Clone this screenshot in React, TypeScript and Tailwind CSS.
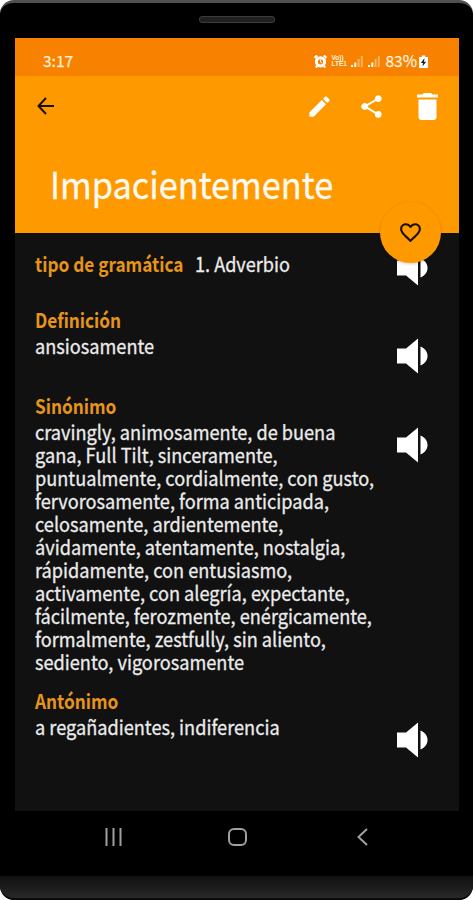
import React from 'react';

interface Seccion {
  titulo: string;
  lineas: string[];
  className: string;
  altavoz: string;
}

const secciones: Seccion[] = [
  { titulo: 'Definición', lineas: ['ansiosamente'], className: 'mt-[33px]', altavoz: 'mt-[4px]' },
  {
    titulo: 'Sinónimo',
    lineas: [
      'cravingly, animosamente, de buena',
      'gana, Full Tilt, sinceramente,',
      'puntualmente, cordialmente, con gusto,',
      'fervorosamente, forma anticipada,',
      'celosamente, ardientemente,',
      'ávidamente, atentamente, nostalgia,',
      'rápidamente, con entusiasmo,',
      'activamente, con alegría, expectante,',
      'fácilmente, ferozmente, enérgicamente,',
      'formalmente, zestfully, sin aliento,',
      'sediento, vigorosamente',
    ],
    className: 'mt-[37px]',
    altavoz: 'mt-[7px]',
  },
  {
    titulo: 'Antónimo',
    lineas: ['a regañadientes, indiferencia'],
    className: 'mt-[16px]',
    altavoz: 'mt-[7px]',
  },
];

const Altavoz: React.FC = () => (
  <svg width="31" height="36" viewBox="0 0 31 36" fill="white" className="shrink-0">
    <path d="M0 10.500h9L21 .5v35L9 25.500H0z" />
    <path d="M23.500 8.500C28 10.500 30.500 14 30.500 18s-2.500 7.500-7 9.500z" />
  </svg>
);

const Senal: React.FC = () => (
  <svg width="12" height="12" viewBox="0 0 12 12" fill="white">
    <path d="M0 10h2v2H0zM3.300 7.500h2V12h-2z" />
    <path d="M6.600 4h2v8h-2zM9.800 1h2v11h-2z" opacity=".4" />
  </svg>
);

const BarraEstado: React.FC = () => (
  <div className="flex h-[38px] items-center justify-between bg-[#f98100] pr-[31px] pl-[28px] pt-[8px] text-[15.500px] leading-none text-[#fff0dc] [-webkit-text-stroke:0.25px]">
    <span>3:17</span>
    <div className="flex items-center">
      <svg width="13" height="13" viewBox="0 0 13 13" fill="none" stroke="white">
        <circle cx="6.500" cy="6.800" r="4.100" strokeWidth="3" />
        <path d="M.5 2.800 3.200.5M12.500 2.800 9.800.5M1.800 12.500l1.500-1.800M11.200 12.500 9.700 10.700" strokeWidth="2.200" />
        <path d="M6.500 4.500v2.500l1.500 1" strokeWidth="1" />
      </svg>
      <span className="ml-[5px] flex w-[17px] flex-col font-['Liberation_Sans',sans-serif] text-[6.500px] leading-[6.500px] font-bold [-webkit-text-stroke:0]">
        <span>Vo))</span>
        <span>LTE1</span>
      </span>
      <span className="ml-[2px]"><Senal /></span>
      <span className="ml-[5px]"><Senal /></span>
      <span className="ml-[6px]">83%</span>
      <svg width="9" height="13" viewBox="0 0 9 13" className="ml-[2px]">
        <path d="M2.800.5h3.400v1.500H9V13H0V2h2.800z" fill="white" />
        <path d="M5.500 3 1.800 8h2.200L3.500 11.500 7.200 6.800H5z" fill="#222" />
      </svg>
    </div>
  </div>
);

const Cabecera: React.FC = () => (
  <header className="relative h-[157px] bg-[#ff9900]">
    <div className="flex h-[60px] items-center">
      <svg width="17" height="18" viewBox="0 0 17 18" fill="none" stroke="#1a1000" strokeWidth="2" className="ml-[22px]">
        <path d="M9 1 1.500 9 9 17M1.500 9H17" />
      </svg>
      <svg width="27" height="27" viewBox="0 0 24 24" fill="white" className="ml-[252px]">
        <path d="M3 17.250V21h3.750L17.810 9.940l-3.750-3.750L3 17.250zM20.710 7.040a1 1 0 0 0 0-1.410l-2.340-2.340a1 1 0 0 0-1.410 0l-1.830 1.830 3.750 3.750 1.830-1.830z" />
      </svg>
      <svg width="27" height="27" viewBox="0 0 24 24" fill="white" className="ml-[25px]">
        <path d="M18 16.080c-.76 0-1.440.3-1.960.77L8.910 12.700c.05-.23.09-.46.09-.7s-.04-.47-.09-.7l7.050-4.110A3 3 0 1 0 15 5c0 .24.04.47.09.7L8.040 9.810a3 3 0 1 0 0 4.380l7.120 4.160c-.05.21-.08.43-.08.65a2.920 2.920 0 1 0 2.920-2.920z" />
      </svg>
      <svg width="21" height="27" viewBox="0 0 21 27" fill="white" className="ml-[32px]">
        <path d="M0 1.500h5.500L7 0h7l1.500 1.500H21v3H0zM1.500 6.500h18V24a3 3 0 0 1-3 3h-12a3 3 0 0 1-3-3z" />
      </svg>
    </div>
    <h1 className="mt-[19px] ml-[35px] w-fit origin-left scale-x-[0.927] text-[37px] leading-[56px] whitespace-nowrap text-[#fffaf2] [-webkit-text-stroke:0.3px]">
      Impacientemente
    </h1>
    {/* Botón de favorito, sobre el borde de la cabecera */}
    <button type="button" className="absolute right-[18px] -bottom-[30px] z-10 flex size-[61px] items-center justify-center rounded-full bg-[#ff9900] shadow-[0_1px_3px_rgba(0,0,0,0.2)]">
      <svg width="25" height="25" viewBox="0 0 24 24" fill="#1a1000">
        <path d="M16.500 3c-1.740 0-3.410.81-4.500 2.090C10.910 3.810 9.240 3 7.500 3 4.420 3 2 5.420 2 8.500c0 3.780 3.400 6.860 8.550 11.540L12 21.350l1.450-1.320C18.600 15.360 22 12.280 22 8.500 22 5.420 19.580 3 16.500 3zm-4.400 15.550-.1.100-.1-.1C7.140 14.240 4 11.390 4 8.500 4 6.500 5.500 5 7.500 5c1.540 0 3.040.99 3.570 2.360h1.870C13.460 5.990 14.960 5 16.500 5c2 0 3.500 1.500 3.500 3.500 0 2.890-3.140 5.740-7.900 10.050z" />
      </svg>
    </button>
  </header>
);

export default function App() {
  return (
    <div className="h-[900px] w-[473px] overflow-hidden bg-white font-['Noto_Sans_CJK_JP','Noto_Sans',sans-serif]">
      <div className="flex h-full flex-col overflow-hidden rounded-[14px] border-t-[3px] border-[#505050] bg-black">
        <div className="flex h-[35px] shrink-0 justify-center pt-[13px]">
          <div className="h-[7px] w-[76px] rounded-[3px] border border-[#3c3c3c] bg-[#202020]" />
        </div>

        <div className="mr-[14px] ml-[15px] flex h-[773px] shrink-0 flex-col bg-[#111111]">
          <BarraEstado />
          <Cabecera />

          <main className="pr-[31px] pl-[20px] text-[20px] leading-[23px] text-[#ececec]">
            <div className="flex h-[42px] justify-between pt-[19px]">
              <div className="flex w-[340px] whitespace-nowrap">
                <span className="w-[160px] origin-left scale-x-[0.86] font-bold text-[#e6951a]">tipo de gramática</span>
                <span className="origin-left scale-x-[0.905] [-webkit-text-stroke:0.3px]">1. Adverbio</span>
              </div>
              <div className="-mt-[2px]"><Altavoz /></div>
            </div>

            {secciones.map((seccion) => (
              <section key={seccion.titulo} className={seccion.className}>
                <h2 className="w-fit origin-left scale-x-[0.86] font-bold text-[#e6951a]">{seccion.titulo}</h2>
                <div className="mt-[3px] flex items-start justify-between">
                  <div className="w-[340px] origin-left scale-x-[0.908] whitespace-nowrap [-webkit-text-stroke:0.3px]">
                    {seccion.lineas.map((linea) => (
                      <p key={linea}>{linea}</p>
                    ))}
                  </div>
                  <div className={`h-0 ${seccion.altavoz}`}><Altavoz /></div>
                </div>
              </section>
            ))}
          </main>
        </div>

        <nav className="flex h-[52px] shrink-0 items-center text-[#a0a0a0]">
          <svg width="17" height="18" viewBox="0 0 17 18" stroke="currentColor" strokeWidth="2" className="ml-[105px]">
            <path d="M1.500 0v18M8.500 0v18M15.500 0v18" />
          </svg>
          <div className="ml-[106px] h-[18px] w-[19px] rounded-[6px] border-2 border-[#a0a0a0]" />
          <svg width="11" height="18" viewBox="0 0 11 18" fill="none" stroke="currentColor" strokeWidth="2" className="ml-[110px]">
            <path d="M10 1 1.500 9l8.500 8" />
          </svg>
        </nav>
        <div className="mt-auto h-[24px] rounded-b-[14px] border-b-2 border-[#0a0a0a] bg-linear-to-b from-[#101010] to-[#292929]" />
      </div>
    </div>
  );
}
